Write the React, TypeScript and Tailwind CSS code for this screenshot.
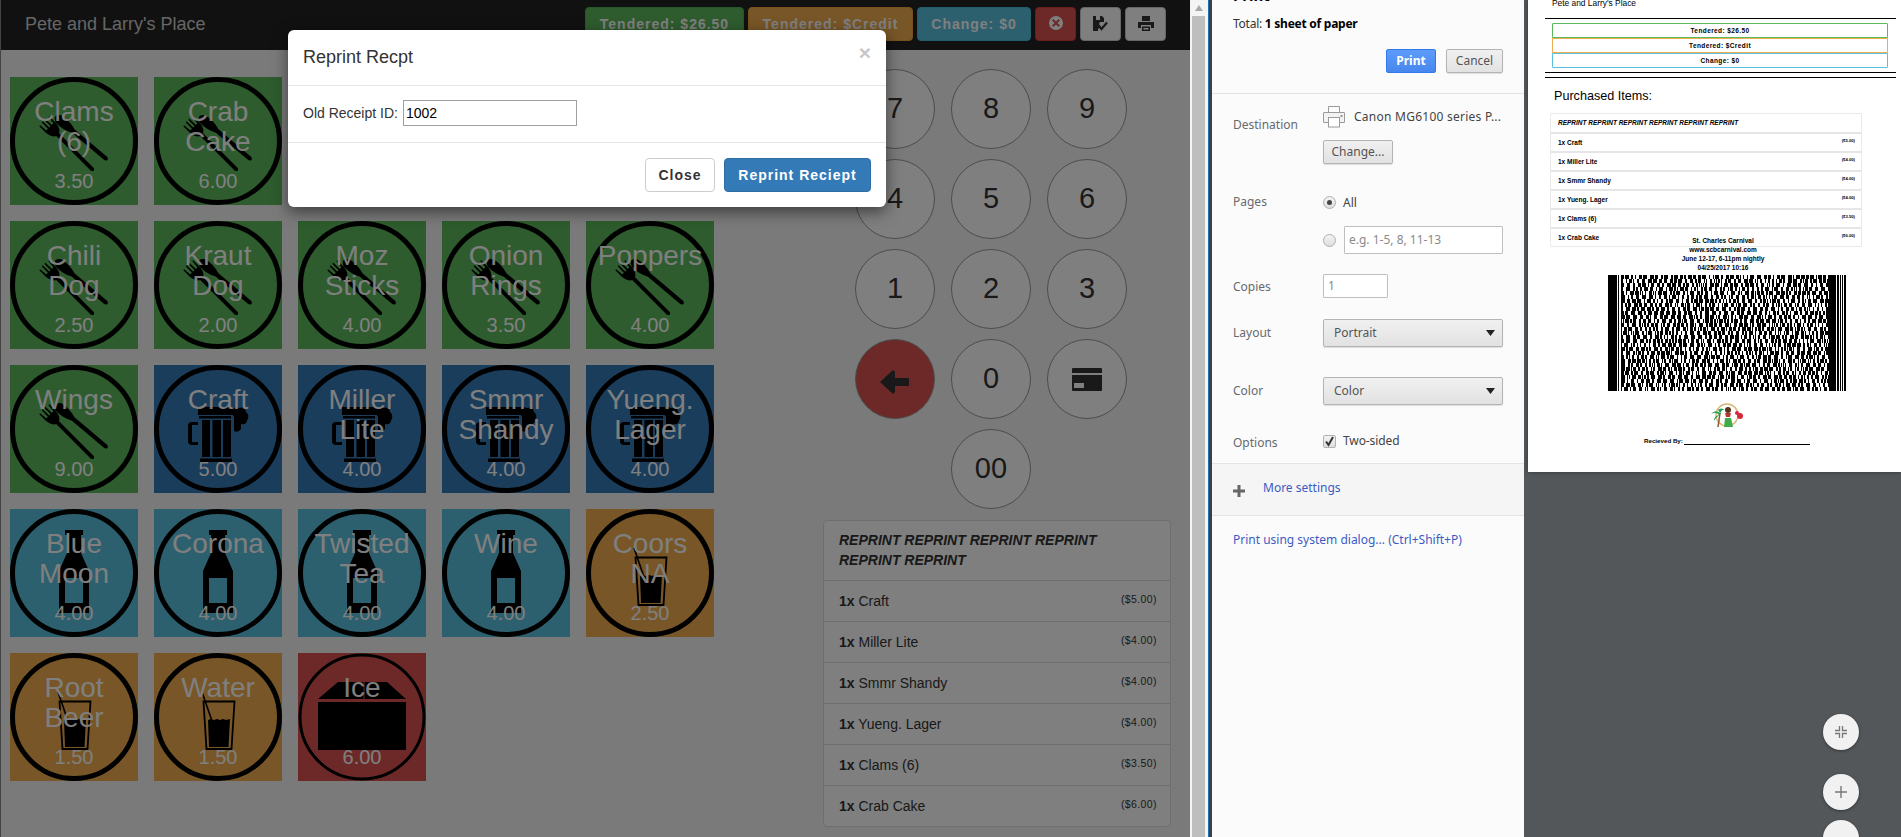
import React from "react";

type Kind = "food" | "beer" | "bottle" | "glass" | "ice";
type Item = { lines: string[]; price: string; kind: Kind; bg: string };

const G = "bg-[#5cb85c]";
const B = "bg-[#337ab7]";
const T = "bg-[#5bc0de]";
const O = "bg-[#f0ad4e]";
const R = "bg-[#d9534f]";

const items: Item[] = [
  { lines: ["Clams", "(6)"], price: "3.50", kind: "food", bg: G },
  { lines: ["Crab", "Cake"], price: "6.00", kind: "food", bg: G },
  { lines: [], price: "", kind: "food", bg: G },
  { lines: [], price: "", kind: "food", bg: G },
  { lines: [], price: "", kind: "food", bg: G },
  { lines: ["Chili", "Dog"], price: "2.50", kind: "food", bg: G },
  { lines: ["Kraut", "Dog"], price: "2.00", kind: "food", bg: G },
  { lines: ["Moz", "Sticks"], price: "4.00", kind: "food", bg: G },
  { lines: ["Onion", "Rings"], price: "3.50", kind: "food", bg: G },
  { lines: ["Poppers"], price: "4.00", kind: "food", bg: G },
  { lines: ["Wings"], price: "9.00", kind: "food", bg: G },
  { lines: ["Craft"], price: "5.00", kind: "beer", bg: B },
  { lines: ["Miller", "Lite"], price: "4.00", kind: "beer", bg: B },
  { lines: ["Smmr", "Shandy"], price: "4.00", kind: "beer", bg: B },
  { lines: ["Yueng.", "Lager"], price: "4.00", kind: "beer", bg: B },
  { lines: ["Blue", "Moon"], price: "4.00", kind: "bottle", bg: T },
  { lines: ["Corona"], price: "4.00", kind: "bottle", bg: T },
  { lines: ["Twisted", "Tea"], price: "4.00", kind: "bottle", bg: T },
  { lines: ["Wine"], price: "4.00", kind: "bottle", bg: T },
  { lines: ["Coors", "NA"], price: "2.50", kind: "glass", bg: O },
  { lines: ["Root", "Beer"], price: "1.50", kind: "glass", bg: O },
  { lines: ["Water"], price: "1.50", kind: "glass", bg: O },
  { lines: ["Ice"], price: "6.00", kind: "ice", bg: R },
];

const sold = [
  ["Craft", "($5.00)"],
  ["Miller Lite", "($4.00)"],
  ["Smmr Shandy", "($4.00)"],
  ["Yueng. Lager", "($4.00)"],
  ["Clams (6)", "($3.50)"],
  ["Crab Cake", "($6.00)"],
];

function TileIcon({ kind }: { kind: Kind }) {
  return (
    <svg viewBox="0 0 128 128" className="absolute inset-0 h-full w-full">
      <circle cx="64" cy="64" r={kind === "ice" ? 62 : 61.5} fill="none" stroke="#000" strokeWidth={kind === "ice" ? 3 : 5} />
      {kind === "food" && (
        <g fill="#000">
          <g transform="translate(42 52) rotate(-45)">
            <path d="M-7 -11 L-5.8 -11 L-5 -3 L-2.8 -3 L-2.6 -12 L-1.2 -12 L-1 -3 L1 -3 L1.2 -12 L2.6 -12 L2.8 -3 L5 -3 L5.8 -11 L7 -11 L7 -1 Q6 6 2 8 L2 57 Q0 61 -2 57 L-2 8 Q-6 6 -7 -1 Z" />
          </g>
          <g transform="translate(50 43) rotate(-50)">
            <path d="M-4.6 -2 Q0 -10 4.6 -2 Q6 8 2.2 17 L2.2 60 Q0 64 -2.2 60 L-2.2 17 Q-6 8 -4.6 -2 Z" />
          </g>
        </g>
      )}
      {kind === "beer" && (
        <g fill="#000">
          <rect x="44" y="42" width="35" height="8" />
          <path d="M79 45 Q80 41 85 43 Q91 41 92 47 Q96 50 93 56 Q92 60 87 59 L87 64 Q84 68 80 66 L80 52 Q78 50 79 45 Z" />
          <rect x="45" y="51" width="32" height="2.5" />
          <rect x="48" y="55" width="8" height="37" />
          <rect x="58.5" y="55" width="8.5" height="37" />
          <rect x="69" y="55" width="8" height="37" />
          <rect x="46" y="93.5" width="32" height="3.5" />
          <path d="M44 57 L38 57 Q34 57 34 61 L34 76 Q34 80 38 80 L44 80 L44 77 L38 77 L38 60 L44 60 Z" />
        </g>
      )}
      {kind === "bottle" && (
        <path
          fill="#000"
          fillRule="evenodd"
          d="M55 21 L73 21 L73 26 L71 26 L71 44 L79 62 L79 104 L49 104 L49 62 L57 44 L57 26 L55 26 Z M55 69 L55 94 L73 94 L73 69 Z"
        />
      )}
      {kind === "glass" && (
        <g>
          <path d="M49.5 48.5 L80.5 48.5 L77.5 96 L52.5 96 Z" fill="none" stroke="#000" strokeWidth="1.8" />
          <path d="M54 67 L57 66 L60 67 L63 66 L66 67 L69 66 L72 67 L76 66 L74.5 94 L55 94 Z" fill="#000" />
          <line x1="48" y1="39" x2="58" y2="68" stroke="#000" strokeWidth="1.6" />
        </g>
      )}
      {kind === "ice" && (
        <g fill="#000">
          <path d="M20 46 L40 29 L65.5 29 L65.5 46 Z" />
          <path d="M66.5 46 L66.5 29 L89 29 L108 46 Z" />
          <rect x="20" y="49" width="88" height="48" />
        </g>
      )}
    </svg>
  );
}

function Tile({ item }: { item: Item }) {
  return (
    <div className={`relative flex h-[128px] w-[128px] flex-col items-center justify-between pb-[10px] pt-[20px] text-white ${item.bg}`}>
      <TileIcon kind={item.kind} />
      <div className="relative whitespace-nowrap text-center text-[28px] leading-[30px]">
        {item.lines.map((l) => (
          <div key={l}>{l}</div>
        ))}
      </div>
      <div className="relative text-[20px] leading-[28px]">{item.price}</div>
    </div>
  );
}

const keyBase = "flex h-[80px] w-[80px] items-center justify-center rounded-full border border-[#999] text-[29px] text-[#333]";

function Keypad() {
  const digits = ["7", "8", "9", "4", "5", "6", "1", "2", "3"];
  return (
    <div className="ml-[32px] grid w-[272px] grid-cols-3 gap-x-[16px] gap-y-[10px] pt-[19px]">
      {digits.map((d) => (
        <div key={d} className={`${keyBase} bg-white`}>{d}</div>
      ))}
      <div className={`${keyBase} bg-[#d9534f]`}>
        <svg width="30" height="24" viewBox="0 0 30 24" className="mt-[5px]">
          <path d="M0 12 L13 0 L15 2 L15 8 L29 8 L29 16 L15 16 L15 22 L13 24 Z" fill="#333" />
        </svg>
      </div>
      <div className={`${keyBase} bg-white`}>0</div>
      <div className={`${keyBase} bg-white`}>
        <svg width="30" height="23" viewBox="0 0 30 23">
          <path fillRule="evenodd" d="M1 0 L29 0 Q30 0 30 1 L30 5 L0 5 L0 1 Q0 0 1 0 Z M0 7 L30 7 L30 22 Q30 23 29 23 L1 23 Q0 23 0 22 Z M2 15 L2 20 L12 20 L12 15 Z" fill="#333" />
        </svg>
      </div>
      <div className={`${keyBase} col-start-2 bg-white`}>00</div>
    </div>
  );
}

function SoldPanel() {
  return (
    <div className="mt-[11px] rounded-[4px] border border-[#ddd] bg-white text-[14px] leading-[20px] text-[#333]">
      <div className="pb-[10px] pl-[15px] pr-[15px] pt-[9px] font-bold italic">REPRINT REPRINT REPRINT REPRINT REPRINT REPRINT</div>
      {sold.map(([n, p]) => (
        <div key={n} className="flex h-[41px] items-start justify-between border-t border-[#ddd] pl-[15px] pr-[13px] pt-[10px]">
          <span><b>1x</b> {n}</span>
          <span className="text-[10.5px] leading-[16px] tracking-[0.4px]">{p}</span>
        </div>
      ))}
    </div>
  );
}

const hdrBtn = "flex h-[34px] items-center justify-center rounded-[4px] border text-[14px] font-bold tracking-[1px] text-white";

function Header() {
  return (
    <div className="flex h-[50px] items-start justify-between bg-[#222] pl-[25px] pr-[24px]">
      <div className="pt-[13px] text-[18px] leading-[22px] text-[#cccccc]">Pete and Larry's Place</div>
      <div className="flex gap-[4px] pt-[7px]">
        <div className={`${hdrBtn} w-[159px] border-[#4cae4c] bg-[#5cb85c]`}>Tendered: $26.50</div>
        <div className={`${hdrBtn} w-[165px] border-[#eea236] bg-[#f0ad4e]`}>Tendered: $Credit</div>
        <div className={`${hdrBtn} w-[114px] border-[#46b8da] bg-[#5bc0de]`}>Change: $0</div>
        <div className={`${hdrBtn} w-[41px] border-[#d43f3a] bg-[#d9534f]`}>
          <svg width="14" height="14" viewBox="0 0 14 14" className="mb-[2px]">
            <circle cx="7" cy="7" r="7" fill="#fff" />
            <path d="M4.4 3 L7 5.6 L9.6 3 L11 4.4 L8.4 7 L11 9.6 L9.6 11 L7 8.4 L4.4 11 L3 9.6 L5.6 7 L3 4.4 Z" fill="#d9534f" />
          </svg>
        </div>
        <div className={`${hdrBtn} w-[41px] border-[#ccc] bg-white`}>
          <svg width="15" height="15" viewBox="0 0 15 15" className="mb-[2px]">
            <path d="M0 0 L9 0 L11 2 L11 6 L7 6 L6 8 L8 11 L5 13 L5 15 L0 15 Z M3 0 L3 4 L7 4 L7 0 Z" fill="#333" fillRule="evenodd" />
            <path d="M6 10 L8.5 13 L14 6.5" fill="none" stroke="#333" strokeWidth="2.2" />
          </svg>
        </div>
        <div className={`${hdrBtn} w-[41px] border-[#ccc] bg-white`}>
          <svg width="16" height="15" viewBox="0 0 16 15" className="mb-[2px]">
            <path d="M4 0 L12 0 L12 5 L4 5 Z" fill="#333" />
            <path fillRule="evenodd" d="M0 6 L16 6 L16 12 L13 12 L13 9 L3 9 L3 12 L0 12 Z" fill="#333" />
            <path d="M4 10.5 L12 10.5 L12 15 L4 15 Z M5.5 12 L5.5 13.5 L10.5 13.5 L10.5 12 Z" fill="#333" fillRule="evenodd" />
          </svg>
        </div>
      </div>
    </div>
  );
}

function Modal() {
  return (
    <div className="absolute left-[288px] top-[30px] w-[598px] rounded-[6px] bg-white text-[#333] shadow-[0_5px_15px_rgba(0,0,0,0.5)]">
      <div className="flex h-[56px] items-start justify-between border-b border-[#e5e5e5] pl-[15px] pr-[15px]">
        <div className="pt-[16px] text-[18px] leading-[22px]">Reprint Recpt</div>
        <div className="pt-[11px] text-[21px] font-bold leading-[24px] text-[#c8c8c8]">×</div>
      </div>
      <div className="flex h-[57px] items-center border-b border-[#e5e5e5] pb-[2px] pl-[15px] text-[14px]">
        <span className="mr-[5px]">Old Receipt ID:</span>
        <div className="flex h-[26px] w-[174px] items-center border border-[#a0a0a0] pl-[2px] text-[14px] leading-none text-black">1002</div>
      </div>
      <div className="flex h-[64px] items-start justify-end gap-[9px] pr-[15px] pt-[15px]">
        <div className="flex h-[34px] w-[70px] items-center justify-center rounded-[4px] border border-[#ccc] bg-white text-[14px] font-bold tracking-[1px] text-[#333]">Close</div>
        <div className="flex h-[34px] w-[147px] items-center justify-center rounded-[4px] border border-[#2e6da4] bg-[#337ab7] text-[14px] font-bold tracking-[1px] text-white">Reprint Reciept</div>
      </div>
    </div>
  );
}

function PosApp() {
  return (
    <div className="relative h-[837px] w-[1190px] shrink-0 overflow-hidden bg-[#f4f4f4] font-['Liberation_Sans',sans-serif]">
      <Header />
      <div className="flex">
        <div className="w-[823px] pl-[10px] pt-[27px]">
          <div className="grid w-[704px] grid-cols-5 gap-[16px]">
            {items.map((it, i) => (
              <Tile key={i} item={it} />
            ))}
          </div>
        </div>
        <div className="w-[348px]">
          <Keypad />
          <SoldPanel />
        </div>
      </div>
      <div className="absolute inset-0 bg-black/50" />
      <div className="absolute inset-y-0 left-0 w-[1px] bg-[#444]" />
      <Modal />
    </div>
  );
}

function Scrollbar() {
  return (
    <div className="flex h-[837px] w-[22px] shrink-0 bg-[#f4f4f4]">
      <div className="ml-[2px] flex w-[13px] flex-col items-center">
        <svg width="12" height="16" viewBox="0 0 12 16"><path d="M2 11 L6 5 L10 11 Z" fill="#a8a8a8" /></svg>
        <div className="w-full flex-1 bg-[#bebebe]" />
      </div>
      <div className="ml-[3px] w-[1px] bg-[#1a6fb5]" />
      <div className="w-[3px] bg-[#3f3f3f]" />
    </div>
  );
}

const btnGrey = "flex items-center justify-center rounded-[2px] border border-[#b4b4b4] bg-gradient-to-b from-[#f0f0f0] to-[#e2e2e2] text-[#555] shadow-[0_1px_1px_rgba(0,0,0,0.12)]";
const selectCls = "flex h-[28px] w-[180px] items-center justify-between rounded-[2px] border border-[#b4b4b4] bg-gradient-to-b from-[#f0f0f0] to-[#e2e2e2] pl-[10px] pr-[7px] text-[#555] shadow-[0_1px_1px_rgba(0,0,0,0.12)]";
const label = "w-[90px] shrink-0 text-[#666a6e]";

function Arrow() {
  return (
    <svg width="9" height="6" viewBox="0 0 9 6"><path d="M0 0 L9 0 L4.5 6 Z" fill="#222" /></svg>
  );
}

function Radio({ on }: { on?: boolean }) {
  return (
    <div className="flex h-[13px] w-[13px] shrink-0 items-center justify-center rounded-full border border-[#b0b0b0] bg-gradient-to-b from-[#f4f4f4] to-[#dedede]">
      {on && <div className="h-[5px] w-[5px] rounded-full bg-[#444]" />}
    </div>
  );
}

function Sidebar() {
  return (
    <div className="flex h-[837px] w-[312px] shrink-0 flex-col overflow-hidden bg-[#fbfbfb] text-[12px] leading-[16px] font-['Noto_Sans',sans-serif]">
      <div className="h-[94px] shrink-0 border-b border-[#e4e4e4] pl-[21px] pr-[21px]">
        <div className="flex h-[3px] items-end overflow-hidden text-[15px] font-bold leading-[16px] text-black">Print</div>
        <div className="mt-[13px] tracking-[-0.25px] text-[#333]">Total: <b className="text-black">1 sheet of paper</b></div>
        <div className="mt-[17px] flex justify-end gap-[10px]">
          <div className="flex h-[24px] w-[50px] items-center justify-center rounded-[2px] border border-[#3079ed] bg-gradient-to-b from-[#5d9cfb] to-[#4787ed] font-bold text-white">Print</div>
          <div className={`${btnGrey} h-[24px] w-[57px]`}>Cancel</div>
        </div>
      </div>
      <div className="flex shrink-0 pl-[21px] pt-[12px]">
        <div className={`${label} pt-[11px]`}>Destination</div>
        <div>
          <div className="flex h-[22px] items-center gap-[9px] text-[#444]">
            <svg width="22" height="22" viewBox="0 0 22 22" fill="none" stroke="#9a9a9a" strokeWidth="1">
              <path d="M5.5 6 L5.5 0.5 L16.5 0.5 L16.5 6" />
              <path d="M5 16.5 L1 16.5 Q0.5 16.5 0.5 16 L0.5 7 Q0.5 6.5 1 6.5 L21 6.5 Q21.5 6.5 21.5 7 L21.5 16 Q21.5 16.5 21 16.5 L17 16.5" fill="#f2f2f2" />
              <rect x="5.5" y="11.5" width="11" height="9.5" fill="#fff" />
              <rect x="17.5" y="9" width="2" height="2" fill="#9a9a9a" stroke="none" />
            </svg>
            <span className="whitespace-nowrap tracking-[0.25px]">Canon MG6100 series P...</span>
          </div>
          <div className={`${btnGrey} mt-[12px] h-[24px] w-[70px]`}>Change...</div>
        </div>
      </div>
      <div className="flex shrink-0 pl-[21px] pt-[31px]">
        <div className={`${label} -mt-[1px]`}>Pages</div>
        <div className="flex items-center gap-[7px] text-[#444]"><Radio on /> <span className="leading-[13px]">All</span></div>
      </div>
      <div className="flex shrink-0 items-center pl-[111px] pt-[16px]">
        <Radio />
        <div className="ml-[8px] flex h-[28px] w-[159px] items-center rounded-[1px] border border-[#bfbfbf] bg-white pl-[4px] text-[#8a8a8a]">e.g. 1-5, 8, 11-13</div>
      </div>
      <div className="flex shrink-0 items-start pl-[21px] pt-[20px]">
        <div className={`${label} pt-[5px]`}>Copies</div>
        <div className="flex h-[24px] w-[65px] items-center rounded-[1px] border border-[#bfbfbf] bg-white pl-[4px] text-[#8a8a8a]">1</div>
      </div>
      <div className="flex shrink-0 items-center pl-[21px] pt-[21px]">
        <div className={label}>Layout</div>
        <div className={selectCls}><span>Portrait</span><Arrow /></div>
      </div>
      <div className="flex shrink-0 items-center pl-[21px] pt-[30px]">
        <div className={label}>Color</div>
        <div className={selectCls}><span>Color</span><Arrow /></div>
      </div>
      <div className="flex shrink-0 items-start pl-[21px] pt-[30px]">
        <div className={label}>Options</div>
        <div className="flex items-center gap-[7px] text-[#444]">
          <div className="flex h-[13px] w-[13px] items-center justify-center rounded-[2px] border border-[#b0b0b0] bg-gradient-to-b from-[#f4f4f4] to-[#dedede]">
            <svg width="11" height="11" viewBox="0 0 11 11"><path d="M2 5.5 L4.5 9 L9 1" fill="none" stroke="#333" strokeWidth="2" /></svg>
          </div>
          <span className="-mt-[2px] leading-[13px] tracking-[-0.1px]">Two-sided</span>
        </div>
      </div>
      <div className="mt-[12px] flex h-[53px] shrink-0 items-center border-y border-[#e4e4e4] bg-[#f5f5f5] pl-[21px] text-[#3b5bc4]">
        <svg width="12" height="12" viewBox="0 0 12 12" className="mr-[18px] mt-[2px]"><path d="M4.5 0 L7.5 0 L7.5 4.5 L12 4.5 L12 7.5 L7.5 7.5 L7.5 12 L4.5 12 L4.5 7.5 L0 7.5 L0 4.5 L4.5 4.5 Z" fill="#666" /></svg>
        <span className="-mt-[3px]">More settings</span>
      </div>
      <div className="pl-[21px] pt-[16px] text-[#3b5bc4]">Print using system dialog... (Ctrl+Shift+P)</div>
    </div>
  );
}

function mulberry(seed: number) {
  let a = seed;
  return () => {
    a = (a + 0x6d2b79f5) | 0;
    let t = Math.imul(a ^ (a >>> 15), 1 | a);
    t = (t + Math.imul(t ^ (t >>> 7), 61 | t)) ^ t;
    return ((t ^ (t >>> 14)) >>> 0) / 4294967296;
  };
}

function Barcode() {
  const rects = React.useMemo(() => {
    const r = mulberry(417);
    const out: { x: number; y: number; w: number }[] = [];
    for (let row = 0; row < 29; row++) {
      let x = 13;
      while (x < 221) {
        const bar = 1 + Math.floor(r() * 4);
        const gap = 1 + Math.floor(r() * 3);
        out.push({ x, y: row * 4, w: bar });
        x += bar + gap;
      }
    }
    return out;
  }, []);
  return (
    <svg width="238" height="116" viewBox="0 0 238 116" shapeRendering="crispEdges" className="block">
      <rect x="0" y="0" width="9" height="116" fill="#000" />
      <rect x="10" y="0" width="1" height="116" fill="#000" />
      {rects.map((q, i) => (
        <rect key={i} x={q.x} y={q.y} width={q.w} height="4" fill="#000" />
      ))}
      <rect x="221" y="0" width="7" height="116" fill="#000" />
      <rect x="229" y="0" width="2" height="116" fill="#000" />
      <rect x="232" y="0" width="1" height="116" fill="#000" />
      <rect x="234" y="0" width="1" height="116" fill="#000" />
      <rect x="236" y="0" width="2" height="116" fill="#000" />
    </svg>
  );
}

function Hula() {
  return (
    <svg width="32" height="26" viewBox="0 0 32 26" className="block">
      <circle cx="16" cy="12" r="11" fill="#fff" stroke="#d9b676" strokeWidth="1.4" />
      <path d="M7 24 L9 10" stroke="#8a5a2b" strokeWidth="1.5" />
      <path d="M9 10 Q4 6 0 11 Q5 8 8 12 Q3 13 3 18 Q6 13 9 12 Q10 6 14 7 Q10 4 7 7 Z" fill="#1f9d55" />
      <circle cx="17" cy="7" r="3" fill="#5a3418" />
      <path d="M14 10 L20 10 L19 14 L15 14 Z" fill="#b8352e" />
      <path d="M14 15 L20 15 L22 24 L13 24 Z" fill="#3fae49" />
      <circle cx="29" cy="13" r="3" fill="#d8263a" />
      <circle cx="26" cy="10" r="2" fill="#d8263a" />
    </svg>
  );
}

function Preview() {
  const box = "flex h-[15px] items-center justify-center border text-[6.5px] font-bold tracking-[0.4px] text-black";
  return (
    <div className="relative h-[837px] flex-1 overflow-hidden bg-[#53575a] pl-[4px] font-['Liberation_Sans',sans-serif]">
      <div className="h-[472px] w-full overflow-hidden bg-white pl-[17px] text-black shadow-[0_0_4px_rgba(0,0,0,0.4)]">
        <div className="-mt-[2px] pl-[7px] text-[8.4px] leading-[10px]">Pete and Larry's Place</div>
        <div className="mt-[10px] h-[1px] w-[351px] bg-black" />
        <div className="w-[343px] pl-[7px] pt-[4px]">
          <div className={`${box} rounded-t-[1px] border-[#5cb85c]`}>Tendered: $26.50</div>
          <div className={`${box} border-[#f0ad4e]`}>Tendered: $Credit</div>
          <div className={`${box} rounded-b-[1px] border-[#5bc0de]`}>Change: $0</div>
        </div>
        <div className="mt-[4px] h-[1px] w-[351px] bg-black" />
        <div className="mt-[4px] h-[1px] w-[351px] bg-black" />
        <div className="pl-[9px] pt-[11px] text-[12.6px] leading-[15px]">Purchased Items:</div>
        <div className="relative ml-[5px] mt-[9px] w-[312px] rounded-[1px] border border-[#eaeaea] text-[6.5px] font-bold leading-[8px]">
          <div className="flex h-[18px] items-center pl-[7px] italic">REPRINT REPRINT REPRINT REPRINT REPRINT REPRINT</div>
          {sold.map(([n, p]) => (
            <div key={n} className="flex h-[19px] items-start justify-between border-t-2 border-[#e6e6e6] pl-[7px] pr-[6px] pt-[5px]">
              <span>1x {n}</span>
              <span className="-mt-[2px] text-[4.2px]">{p}</span>
            </div>
          ))}
        </div>
        <div className="relative -mt-[11px] w-[356px] text-center text-[6.5px] font-bold leading-[9px]">
          <div>St. Charles Carnival</div>
          <div>www.scbcarnival.com</div>
          <div>June 12-17, 6-11pm nightly</div>
          <div>04/25/2017 10:16</div>
        </div>
        <div className="mt-[3px] flex w-[364px] justify-center"><Barcode /></div>
        <div className="mt-[12px] flex w-[364px] justify-center"><Hula /></div>
        <div className="ml-[99px] mt-[8px] flex items-end text-[6.2px] font-bold leading-[8px]">
          <span>Recieved By:</span>
          <div className="ml-[1px] h-[1px] w-[126px] bg-black" />
        </div>
      </div>
      <div className="absolute left-[299px] top-[714px] flex h-[36px] w-[36px] items-center justify-center rounded-full bg-[#f1f1f1] shadow-[0_1px_3px_rgba(0,0,0,0.4)]">
        <svg width="12" height="12" viewBox="0 0 12 12" fill="none" stroke="#777" strokeWidth="1.3">
          <path d="M0 4.5 L4.5 4.5 L4.5 0 M7.5 0 L7.5 4.5 L12 4.5 M0 7.5 L4.5 7.5 L4.5 12 M7.5 12 L7.5 7.5 L12 7.5" />
        </svg>
      </div>
      <div className="absolute left-[299px] top-[774px] flex h-[36px] w-[36px] items-center justify-center rounded-full bg-[#f1f1f1] shadow-[0_1px_3px_rgba(0,0,0,0.4)]">
        <svg width="12" height="12" viewBox="0 0 12 12" fill="none" stroke="#777" strokeWidth="1.4"><path d="M6 0 L6 12 M0 6 L12 6" /></svg>
      </div>
      <div className="absolute left-[299px] top-[820px] flex h-[36px] w-[36px] items-center justify-center rounded-full bg-[#f1f1f1] shadow-[0_1px_3px_rgba(0,0,0,0.4)]" />
    </div>
  );
}

export default function App() {
  return (
    <div className="flex h-[837px] w-[1901px] overflow-hidden">
      <PosApp />
      <Scrollbar />
      <Sidebar />
      <Preview />
    </div>
  );
}
